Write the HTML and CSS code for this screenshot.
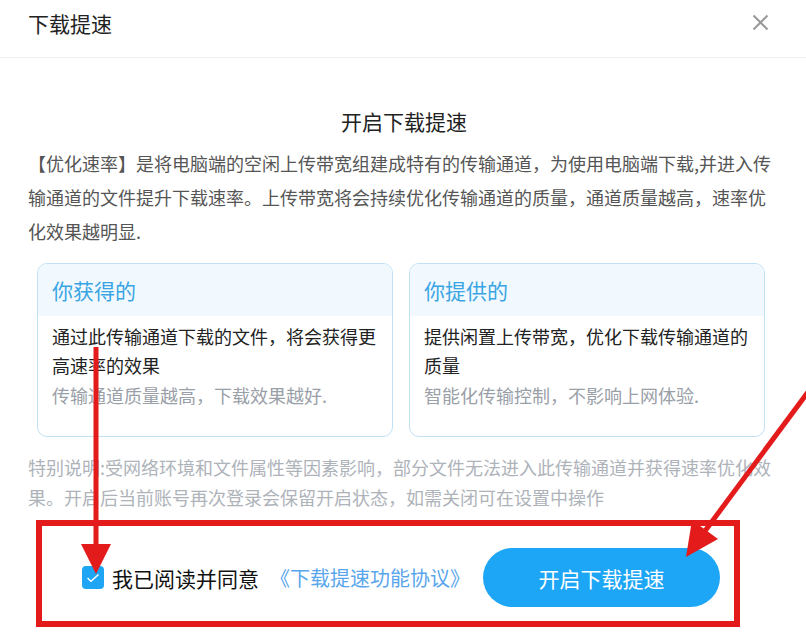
FILE: index.html
```html
<!DOCTYPE html>
<html lang="zh-CN">
<head>
<meta charset="utf-8">
<title>下载提速</title>
<link rel="stylesheet" href="styles.css">
</head>
<body>
<div class="dialog">
  <header class="dlg-header">
    <h1 class="dlg-title">下载提速</h1>
    <button class="dlg-close" aria-label="关闭">
      <svg width="17" height="17" viewBox="0 0 17 17"><path d="M1.5 1.5 L15.5 15.5 M15.5 1.5 L1.5 15.5" stroke="#999" stroke-width="2" fill="none"/></svg>
    </button>
  </header>
  <main class="dlg-body">
    <h2 class="heading">开启下载提速</h2>
    <p class="intro">【优化速率】是将电脑端的空闲上传带宽组建成特有的传输通道，为使用电脑端下载,并进入传输通道的文件提升下载速率。上传带宽将会持续优化传输通道的质量，通道质量越高，速率优化效果越明显.</p>
    <div class="cards">
      <section class="card">
        <div class="card-head">你获得的</div>
        <div class="card-body">
          <p class="card-main">通过此传输通道下载的文件，将会获得更高速率的效果</p>
          <p class="card-sub">传输通道质量越高，下载效果越好.</p>
        </div>
      </section>
      <section class="card">
        <div class="card-head">你提供的</div>
        <div class="card-body">
          <p class="card-main">提供闲置上传带宽，优化下载传输通道的质量</p>
          <p class="card-sub">智能化传输控制，不影响上网体验.</p>
        </div>
      </section>
    </div>
    <p class="note">特别说明:受网络环境和文件属性等因素影响，部分文件无法进入此传输通道并获得速率优化效果。开启后当前账号再次登录会保留开启状态，如需关闭可在设置中操作</p>
    <div class="footer">
      <label class="agree">
        <span class="check">
          <svg width="14" height="10" viewBox="0 0 14 10"><path d="M1.5 5 L5 8.2 L12.5 1.5" stroke="#fff" stroke-width="1.4" fill="none"/></svg>
        </span>
        <span class="agree-text">我已阅读并同意</span>
        <a class="agree-link" href="#">《下载提速功能协议》</a>
      </label>
      <button class="primary">开启下载提速</button>
    </div>
  </main>
  <svg class="annot" width="806" height="636" viewBox="0 0 806 636">
    <rect x="39" y="523" width="698" height="101" fill="none" stroke="#e31b1b" stroke-width="6"/>
    <line x1="96" y1="347" x2="96" y2="548" stroke="#e31b1b" stroke-width="5"/>
    <polygon points="81,544 111,544 96,574" fill="#e31b1b"/>
    <line x1="808" y1="392" x2="702" y2="535" stroke="#e31b1b" stroke-width="5"/>
    <polygon points="686,557 692,520 718,539" fill="#e31b1b"/>
  </svg>
</div>
</body>
</html>
```

FILE: styles.css
```css
* { box-sizing: border-box; }
html, body {
  margin: 0;
  padding: 0;
  background: #fff;
}
body {
  font-family: "Noto Sans CJK SC", "Noto Sans", sans-serif;
  color: #222;
}
.dialog {
  position: relative;
  width: 806px;
  height: 636px;
  overflow: hidden;
}
.dlg-header {
  height: 58px;
  display: flex;
  align-items: center;
  justify-content: space-between;
  padding: 0 37px 12px 28px;
  border-bottom: 1px solid #f0f0f0;
}
.dlg-title {
  margin: 0;
  font-size: 21px;
  font-weight: 400;
  color: #222;
  line-height: 30px;
}
.dlg-close {
  border: 0;
  background: none;
  padding: 0;
  width: 17px;
  height: 17px;
  display: flex;
}
.dlg-body {
  padding: 0 26px 0 28px;
}
.heading {
  margin: 48px 0 0;
  text-align: center;
  font-size: 21px;
  font-weight: 400;
  line-height: 30px;
  color: #222;
}
.intro {
  margin: 10px 0 0;
  font-size: 18px;
  line-height: 34px;
  color: #555;
}
.cards {
  margin: 15px 15px 0 9px;
  display: grid;
  grid-template-columns: 1fr 1fr;
  gap: 16px;
}
.card {
  height: 174px;
  border: 1px solid #bfe1f5;
  border-radius: 10px;
  overflow: hidden;
}
.card-head {
  height: 52px;
  background: #f1f9fe;
  padding: 0 14px;
  font-size: 21px;
  line-height: 52px;
  color: #3aa5e4;
}
.card-body {
  padding: 6px 14px 0;
}
.card-main {
  margin: 0;
  font-size: 18px;
  line-height: 29px;
  color: #222;
}
.card-sub {
  margin: 0;
  font-size: 18px;
  line-height: 30px;
  color: #9aa0a8;
}
.note {
  margin: 15px 0 0;
  font-size: 18px;
  line-height: 30px;
  color: #aeb3ba;
}
.footer {
  margin: 36px 0 0 54px;
  display: flex;
  align-items: center;
  height: 59px;
}
.agree {
  display: flex;
  align-items: center;
}
.check {
  width: 22px;
  height: 23px;
  border-radius: 4px;
  background: #1ea6f5;
  display: flex;
  align-items: center;
  justify-content: center;
  margin-right: 8px;
}
.agree-text {
  font-size: 21px;
  color: #111;
}
.agree-link {
  font-size: 20px;
  color: #5aa6ec;
  text-decoration: none;
  margin-left: 11px;
}
.primary {
  margin-left: 13px;
  width: 237px;
  height: 59px;
  border: 0;
  border-radius: 30px;
  background: #1ea6f6;
  color: #fff;
  font-family: "Noto Sans CJK SC", "Noto Sans", sans-serif;
  font-size: 21px;
}
.annot {
  position: absolute;
  left: 0;
  top: 0;
  pointer-events: none;
}
```
